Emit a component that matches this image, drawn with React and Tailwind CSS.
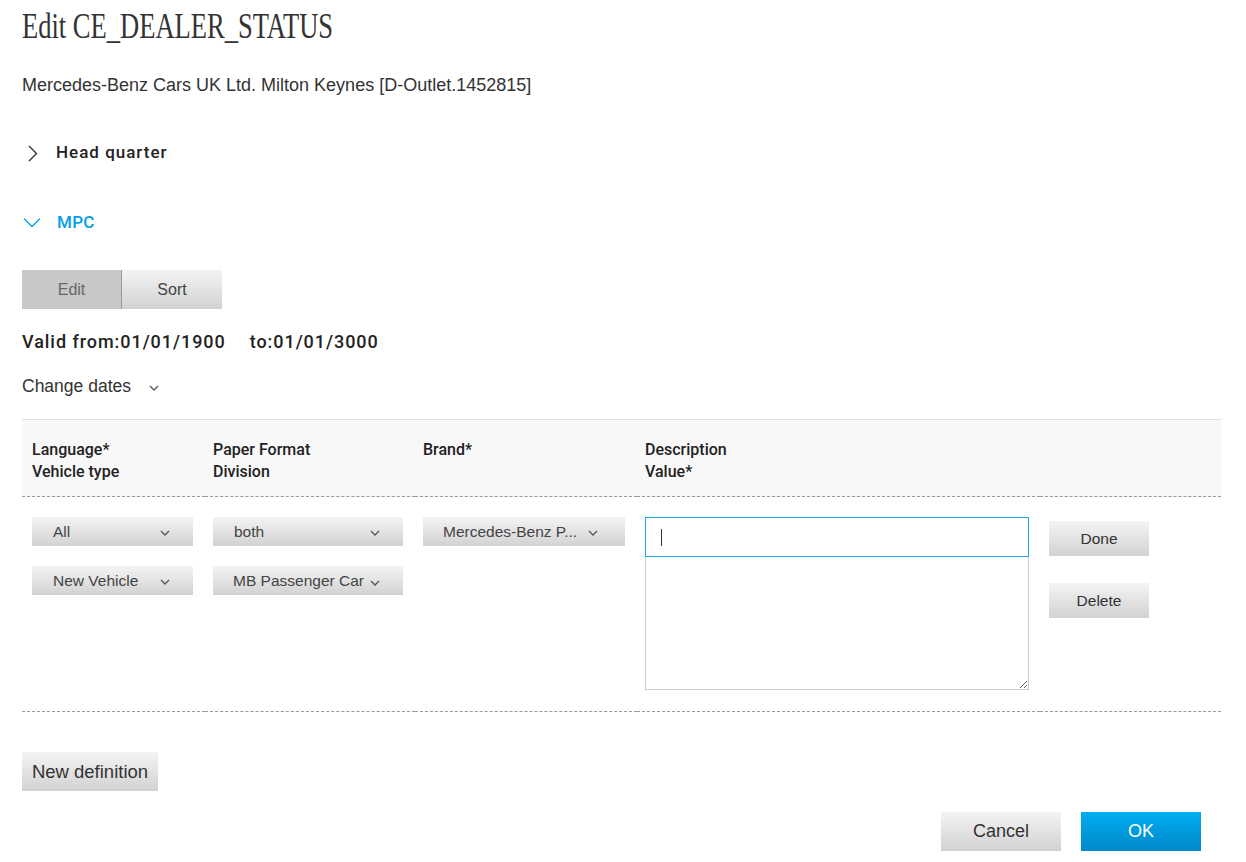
const sans = "font-['Liberation_Sans',Arial,sans-serif]"
const bold = "font-['Roboto','Liberation_Sans',sans-serif] font-medium"
const grad = 'bg-gradient-to-b from-[#f4f4f4] to-[#d2d2d2]'

function Caret({ className = '' }) {
  return (
    <svg width="10" height="6" viewBox="0 0 10 6" className={`shrink-0 ${className}`}>
      <polyline points="1,1 5,5 9,1" fill="none" stroke="#555" strokeWidth="1.3" />
    </svg>
  )
}

function Select({ label, w }) {
  return (
    <div className={`${grad} ${w} h-[29px] flex items-center justify-between pl-[21px] pr-[23px] text-[15.5px] text-[#444] ${sans}`}>
      <span className="truncate">{label}</span>
      <Caret className="mt-[3px]" />
    </div>
  )
}

function Btn({ children, className = '' }) {
  return (
    <button className={`${grad} text-[#333] ${sans} ${className}`}>{children}</button>
  )
}

export default function App() {
  return (
    <div className="bg-white min-h-[862px] pl-[22px] pr-[25px] text-[#333]">
      <div className="h-[56px] pt-[4px] overflow-hidden">
        <h1 className="origin-left scale-x-[0.737] whitespace-nowrap text-[36px] leading-[44px] text-[#333] font-['Liberation_Serif',serif]">
          Edit CE_DEALER_STATUS
        </h1>
      </div>
      <div className={`h-[57px] pt-[18px] text-[18px] leading-[22px] ${sans}`}>
        Mercedes-Benz Cars UK Ltd. Milton Keynes [D-Outlet.1452815]
      </div>

      <div className={`mt-[5px] h-[70px] flex items-center gap-[19px] text-[17px] tracking-[1px] text-[#222] ${bold}`}>
        <svg width="12" height="17" viewBox="0 0 12 17" className="ml-[5px]">
          <polyline points="2,1 9.5,8.5 2,16" fill="none" stroke="#333" strokeWidth="1.4" />
        </svg>
        <span className="-ml-[2px]">Head quarter</span>
      </div>
      <div className={`h-[69px] flex items-center gap-[16px] text-[17px] tracking-[0.3px] text-[#00a0e3] ${bold}`}>
        <svg width="18" height="11" viewBox="0 0 18 11" className="ml-[1px]">
          <polyline points="1,1.5 9,9.5 17,1.5" fill="none" stroke="#00a0e3" strokeWidth="1.3" />
        </svg>
        <span>MPC</span>
      </div>

      <div className="pt-[13px] flex">
        <button className={`w-[100px] h-[39px] bg-[#c8c8c8] text-[#666] text-[16px] ${sans} border-r border-[#9a9a9a]`}>Edit</button>
        <button className={`w-[100px] h-[39px] ${grad} text-[#444] text-[16px] ${sans}`}>Sort</button>
      </div>

      <div className={`h-[67px] pt-[22px] text-[18px] tracking-[0.95px] leading-[22px] text-[#222] flex gap-[24px] ${bold}`}>
        <span>Valid from:01/01/1900</span>
        <span>to:01/01/3000</span>
      </div>

      <div className={`h-[43px] flex items-start gap-[18px] text-[17.5px] leading-[22px] ${sans}`}>
        <span className="-mt-[1px]">Change dates</span>
        <Caret className="mt-[9px]" />
      </div>

      <table className="w-[1199px] border-collapse table-fixed">
        <colgroup>
          <col className="w-[183px]" />
          <col className="w-[210px]" />
          <col className="w-[222px]" />
          <col className="w-[403px]" />
          <col className="w-[181px]" />
        </colgroup>
        <thead>
          <tr className={`bg-[#f8f8f8] text-left align-top text-[16px] leading-[22px] text-[#222] ${bold}`}>
            <th className="pl-[10px] pt-[19px] pb-[13px] font-medium border-t border-t-[#dddddd] border-b border-dashed border-b-[#999] [border-top-style:solid]">Language*<br />Vehicle type</th>
            <th className="pl-[8px] pt-[19px] pb-[13px] font-medium border-t border-t-[#dddddd] border-b border-dashed border-b-[#999] [border-top-style:solid]">Paper Format<br />Division</th>
            <th className="pl-[8px] pt-[19px] pb-[13px] font-medium border-t border-t-[#dddddd] border-b border-dashed border-b-[#999] [border-top-style:solid]">Brand*</th>
            <th className="pl-[8px] pt-[19px] pb-[13px] font-medium border-t border-t-[#dddddd] border-b border-dashed border-b-[#999] [border-top-style:solid]">Description<br />Value*</th>
            <th className="border-t border-t-[#dddddd] border-b border-dashed border-b-[#999] [border-top-style:solid]"></th>
          </tr>
        </thead>
        <tbody>
          <tr className="border-b border-dashed border-[#999] align-top">
            <td className="pl-[10px] pt-[20px] pb-[21px]">
              <div className="flex flex-col gap-[20px]">
                <Select label="All" w="w-[161px]" />
                <Select label="New Vehicle" w="w-[161px]" />
              </div>
            </td>
            <td className="pl-[8px] pt-[20px]">
              <div className="flex flex-col gap-[20px]">
                <Select label="both" w="w-[190px]" />
                <div className={`${grad} w-[190px] h-[29px] flex items-center pl-[20px] text-[15.5px] text-[#444] ${sans}`}>
                  <span>MB Passenger Car</span>
                  <Caret className="ml-[6px] mt-[4px]" />
                </div>
              </div>
            </td>
            <td className="pl-[8px] pt-[20px]">
              <div className={`${grad} w-[202px] h-[29px] flex items-center pl-[20px] text-[15.5px] text-[#444] ${sans}`}>
                <span>Mercedes-Benz P...</span>
                <Caret className="ml-[11px] mt-[3px]" />
              </div>
            </td>
            <td className="pl-[8px] pt-[20px] pb-[21px]">
              <div className="w-[384px] h-[40px] border border-[#1ea7e1] flex items-center pl-[15px]">
                <span className="w-px h-[17px] bg-[#333]" />
              </div>
              <textarea
                readOnly
                className="block w-[384px] h-[133px] border border-t-0 border-[#cccccc] resize outline-none"
              />
            </td>
            <td className="pl-[9px] pt-[24px]">
              <div className="flex flex-col gap-[27px]">
                <Btn className="w-[100px] h-[35px] text-[15.5px]">Done</Btn>
                <Btn className="w-[100px] h-[35px] text-[15.5px]">Delete</Btn>
              </div>
            </td>
          </tr>
        </tbody>
      </table>

      <div className="pt-[40px]">
        <Btn className="w-[136px] h-[39px] text-[18.5px] rounded-[1px]">New definition</Btn>
      </div>

      <div className="pt-[21px] flex justify-end gap-[20px] pr-[20px]">
        <Btn className="w-[120px] h-[39px] text-[18px]">Cancel</Btn>
        <button className={`w-[120px] h-[39px] bg-gradient-to-b from-[#00aeef] to-[#0088c9] text-white text-[18px] ${sans}`}>OK</button>
      </div>
    </div>
  )
}
